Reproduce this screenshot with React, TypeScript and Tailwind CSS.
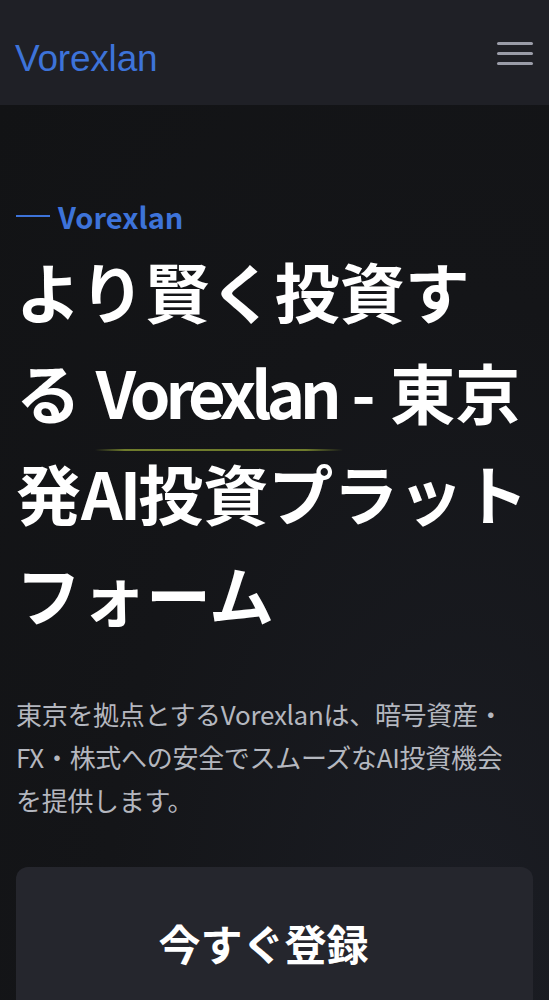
import React from "react";

const cjk = { fontFamily: '"Noto Sans CJK JP", "Noto Sans", sans-serif' };

export default function App() {
  return (
    <div className="min-h-screen w-full bg-[#131416]" style={cjk}>
      <header className="h-[105px] bg-[#1f2026] flex items-center justify-between pl-[15px] pr-[16px]">
        <span
          className="text-[37px] text-[#3d73d9] leading-none tracking-[-0.2px] mt-[12px]"
          style={{ fontFamily: '"Liberation Sans", Arial, sans-serif' }}
        >
          Vorexlan
        </span>
        <button className="flex flex-col gap-[7px] mt-[2px]" aria-label="menu">
          <span className="block w-[36px] h-[3px] bg-[#9a9ca8] rounded-sm" />
          <span className="block w-[36px] h-[3px] bg-[#9a9ca8] rounded-sm" />
          <span className="block w-[36px] h-[3px] bg-[#9a9ca8] rounded-sm" />
        </button>
      </header>
      <main className="bg-[radial-gradient(ellipse_at_85%_90%,#1b1d24_0%,#141518_55%,#121315_100%)] px-[16px] pt-[91px] pb-[40px]">
        <div className="flex items-center gap-[8px] text-[#3d73d9] text-[29px] font-semibold leading-[40px]">
          <span className="block w-[34px] h-[2px] bg-[#3d73d9]" />
          <span>Vorexlan</span>
        </div>
        <h1 className="relative mt-[4px] text-white font-bold text-[65px] leading-[101px]">
          より賢く投資する <span className="tracking-[-5px]">Vorexlan</span> - 東京発<span className="tracking-[-3px]">AI</span>投資プラットフォーム
          <span className="absolute left-[79px] top-[209px] w-[248px] h-[2px] bg-[linear-gradient(90deg,rgba(110,125,40,0)_0%,#6f7c2c_12%,#6f7c2c_85%,rgba(110,125,40,0)_100%)]" />
        </h1>
        <p className="mt-[48px] pr-[20px] text-[26px] leading-[43px] text-[#b4b7bf] tracking-[-0.3px]">
          東京を拠点とするVorexlanは、暗号資産・FX・株式への安全でスムーズなAI投資機会を提供します。
        </p>
        <button className="mt-[46px] w-full rounded-[12px] bg-[#25262d] pt-[46px] pb-[64px] pr-[22px] text-white text-[42px] font-bold leading-[60px]">
          今すぐ登録
        </button>
      </main>
    </div>
  );
}
